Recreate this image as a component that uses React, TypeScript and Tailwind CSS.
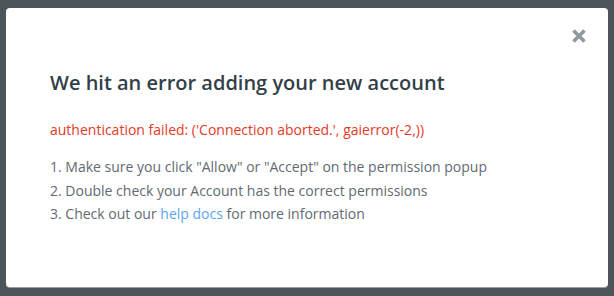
export default function App() {
  return (
    <div className="flex h-[296px] w-[614px] bg-[#4a5659] px-[6px] pt-[8px] pb-[9px] font-['Open_Sans',sans-serif]">
      <div className="relative flex-1 rounded-[4px] bg-white pl-[44px] pt-[61px] shadow-[0_1px_0_#9aa1a3]">
        <button className="absolute right-[20px] top-[19px] text-[#8f989c]" aria-label="Close">
          <svg width="18" height="18" viewBox="0 0 18 18">
            <path d="M3.5 3.5L14.5 14.5M14.5 3.5L3.5 14.5" stroke="currentColor" strokeWidth="3.6" strokeLinecap="butt" />
          </svg>
        </button>
        <h2 className="text-[20px] font-semibold leading-[28px] text-[#333f48]">
          We hit an error adding your new account
        </h2>
        <p className="mt-[24px] text-[14px] leading-[18px] text-[#e53a26]">
          authentication failed: ('Connection aborted.', gaierror(-2,))
        </p>
        <ol className="mt-[16px] text-[14px] leading-[23.5px] text-[#5f6a72]">
          <li>1. Make sure you click "Allow" or "Accept" on the permission popup</li>
          <li>2. Double check your Account has the correct permissions</li>
          <li>
            3. Check out our <a className="text-[#5aa7ee]">help docs</a> for more information
          </li>
        </ol>
      </div>
    </div>
  );
}
